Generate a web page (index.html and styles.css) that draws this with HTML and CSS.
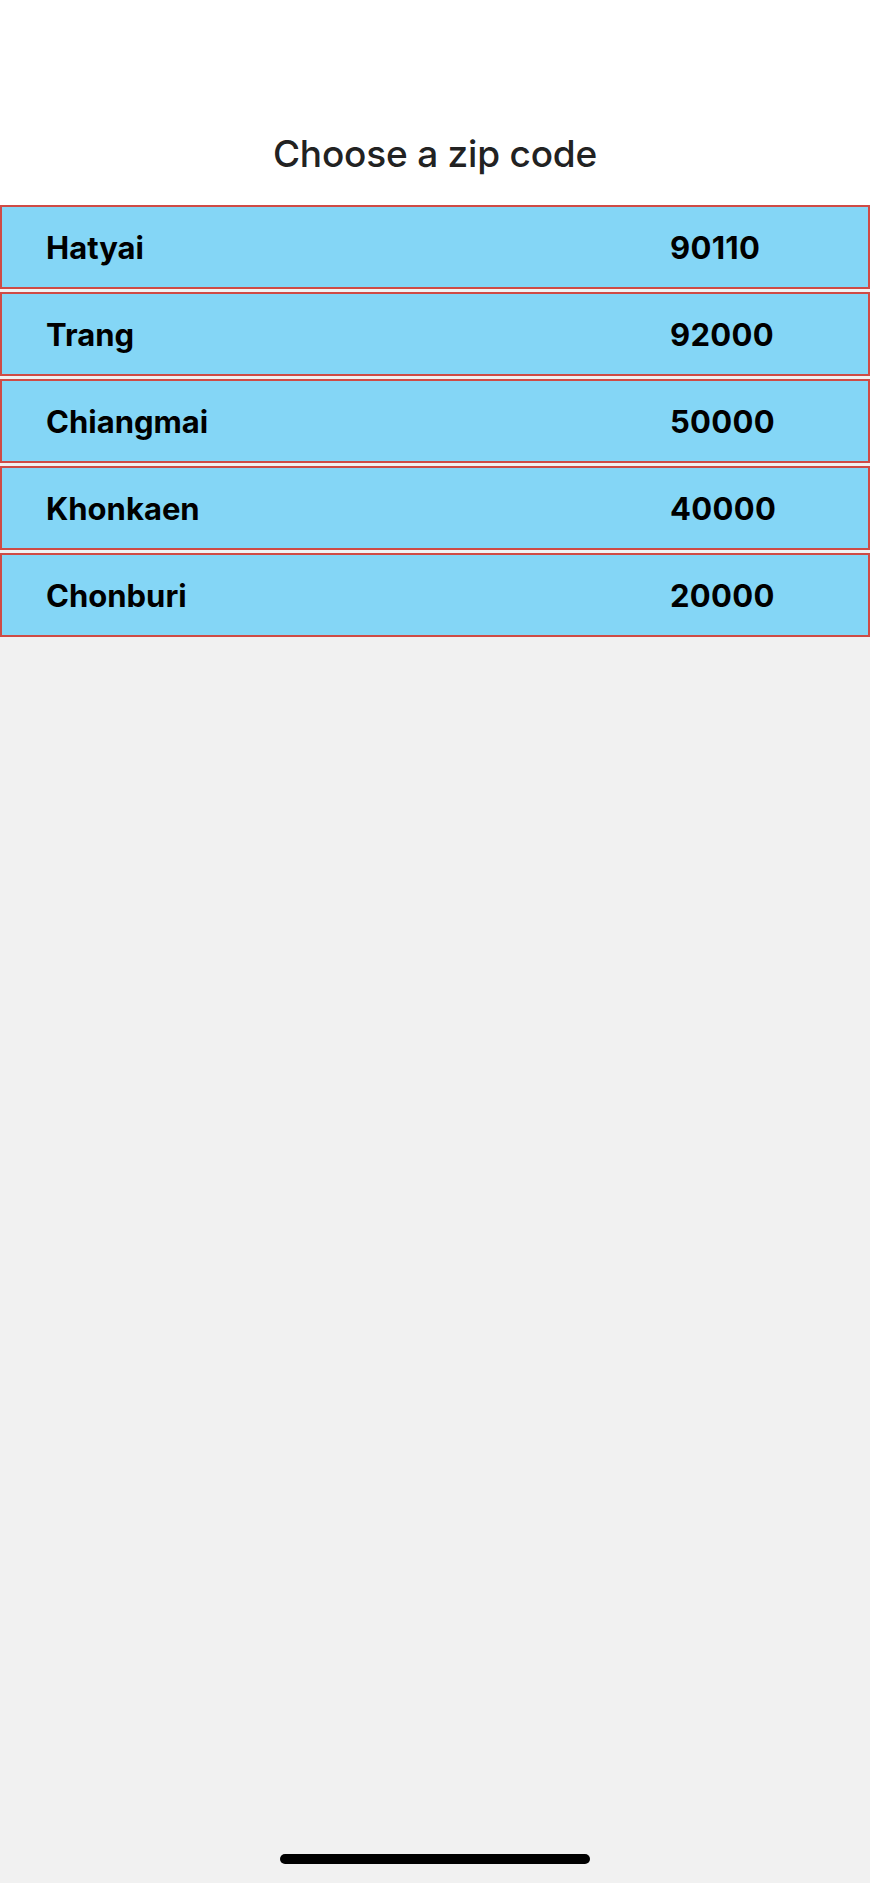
FILE: index.html
```html
<!DOCTYPE html>
<html>
<head>
<meta charset="utf-8">
<link rel="stylesheet" href="styles.css">
</head>
<body>
<div class="screen">
  <header class="header">
    <h1 class="title">Choose a zip code</h1>
  </header>
  <main class="list">
    <div class="row"><span class="name">Hatyai</span><span class="zip">90110</span></div>
    <div class="row"><span class="name">Trang</span><span class="zip">92000</span></div>
    <div class="row"><span class="name">Chiangmai</span><span class="zip">50000</span></div>
    <div class="row"><span class="name">Khonkaen</span><span class="zip">40000</span></div>
    <div class="row"><span class="name">Chonburi</span><span class="zip">20000</span></div>
  </main>
  <div class="home-bar"><div class="home-indicator"></div></div>
</div>
</body>
</html>
```
FILE: styles.css
```css
html, body {
  margin: 0;
  padding: 0;
  background: #f1f1f1;
}
.screen {
  width: 870px;
  height: 1883px;
  display: flex;
  flex-direction: column;
  font-family: Inter, "Liberation Sans", sans-serif;
  background: #f1f1f1;
}
.header {
  background: #ffffff;
  height: 205px;
  display: flex;
  align-items: flex-end;
  justify-content: center;
}
.title {
  margin: 0 0 30px 0;
  font-size: 37px;
  font-weight: 500;
  color: #222222;
  letter-spacing: -0.2px;
  line-height: 42px;
}
.list {
  display: flex;
  flex-direction: column;
  gap: 3px;
  flex: 1;
}
.row {
  height: 84px;
  box-sizing: border-box;
  border: 2px solid #cf4b45;
  background: #84d6f6;
  display: flex;
  align-items: center;
  padding-left: 44px;
  color: #000;
  font-size: 31px;
  font-weight: 700;
}
.name {
  width: 624px;
}
.zip {
  letter-spacing: 0.3px;
}
.home-bar {
  height: 29px;
  display: flex;
  justify-content: center;
  align-items: flex-start;
}
.home-indicator {
  width: 310px;
  height: 10px;
  border-radius: 5px;
  background: #000;
}
```
